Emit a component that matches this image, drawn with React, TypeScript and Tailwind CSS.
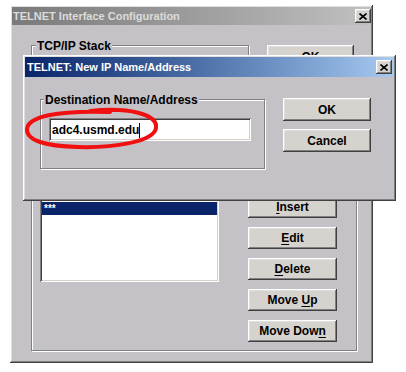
import type { ReactNode } from 'react'

const raised = 'shadow-[inset_-1px_-1px_#404040,inset_1px_1px_#ffffff,inset_-2px_-2px_#808080,inset_2px_2px_#dfdfdf]'
const sunken = 'shadow-[inset_1px_1px_#808080,inset_-1px_-1px_#ffffff,inset_2px_2px_#404040,inset_-2px_-2px_#d4d0c8]'
const etched = 'border border-[#808080] shadow-[inset_1px_1px_#ffffff,1px_1px_#ffffff]'

function CloseBox() {
  return (
    <div className={`w-[16px] h-[14px] bg-[#d6d3ce] flex items-center justify-center ${raised}`}>
      <svg width="8" height="7" viewBox="0 0 8 7">
        <path d="M0.5 0.5 L7.5 6.5 M7.5 0.5 L0.5 6.5" stroke="#000" strokeWidth="1.6" />
      </svg>
    </div>
  )
}

function Btn({ children, className = '' }: { children: ReactNode; className?: string }) {
  return (
    <div className={`h-[22px] bg-[#d6d3ce] flex items-center justify-center text-[12px] font-bold text-black ${raised} ${className}`}>
      {children}
    </div>
  )
}

function U({ children }: { children: ReactNode }) {
  return <span className="underline underline-offset-[2px]">{children}</span>
}

export default function App() {
  return (
    <div className="relative w-[406px] h-[372px] bg-white overflow-hidden font-['Liberation_Sans',Arial,sans-serif]">
      {/* main window */}
      <div className={`absolute left-[10px] top-[5px] w-[363px] h-[358px] bg-[#c4c2c6] p-[2px] flex flex-col ${raised}`}>
        <div className="h-[18px] flex items-center justify-between pl-[1px] bg-linear-to-r from-[#7a7a7a] to-[#c0c0c0]">
          <span className="text-[11px] font-bold text-[#dcdcdc] leading-none">TELNET Interface Configuration</span>
          <CloseBox />
        </div>
        <div className="flex items-start pl-[19px] pt-[20px]">
          <div className={`relative w-[218px] h-[100px] ${etched}`}>
            <span className="absolute -top-[7px] left-[4px] px-[1px] bg-[#c4c2c6] text-[12px] leading-[14px] font-bold text-black">TCP/IP Stack</span>
          </div>
          <Btn className="ml-[18px] w-[87px] !h-[23px]">OK</Btn>
        </div>
        <div className={`ml-[19px] mt-[5px] w-[326px] h-[201px] flex items-start ${etched}`}>
          <div className={`ml-[8px] mt-[48px] w-[179px] h-[83px] bg-white p-[2px] ${sunken}`}>
            <div className="mt-[1px] h-[13px] bg-[#0a246a] text-white text-[10px] font-bold leading-[13px] pl-[2px]">***</div>
          </div>
          <div className="ml-[29px] mt-[45px] flex flex-col gap-[9px] w-[89px]">
            <Btn><U>I</U>nsert</Btn>
            <Btn><U>E</U>dit</Btn>
            <Btn><U>D</U>elete</Btn>
            <Btn>Move&nbsp;<U>U</U>p</Btn>
            <Btn>Move Dow<U>n</U></Btn>
          </div>
        </div>
      </div>

      {/* dialog */}
      <div className={`absolute left-[23px] top-[55px] w-[373px] h-[146px] bg-[#c4c2c6] p-[2px] flex flex-col ${raised}`}>
        <div className="h-[20px] flex items-center justify-between px-[2px] bg-linear-to-r from-[#0a246a] to-[#a6caf0]">
          <span className="text-[11px] font-bold text-white leading-none">TELNET: New IP Name/Address</span>
          <CloseBox />
        </div>
        <div className="flex items-start pl-[15px]">
          <div className={`relative mt-[22px] w-[225px] h-[70px] ${etched}`}>
            <span className="absolute -top-[7px] left-[3px] px-[1px] bg-[#c4c2c6] text-[12px] leading-[14px] font-bold text-black">Destination Name/Address</span>
            <div className={`ml-[8px] mt-[18px] w-[202px] h-[23px] bg-white pl-[3px] pt-[1px] flex items-center ${sunken}`}>
              <span className="text-[12px] font-bold text-black leading-none">adc4.usmd.edu</span>
              <span className="w-[1px] h-[15px] bg-black" />
            </div>
          </div>
          <div className="ml-[18px] mt-[21px] flex flex-col gap-[8px] w-[88px]">
            <Btn className="!h-[23px]">OK</Btn>
            <Btn className="!h-[23px]">Cancel</Btn>
          </div>
        </div>
      </div>

      {/* red hand-drawn circle */}
      <svg className="absolute left-0 top-0 pointer-events-none" width="406" height="372" viewBox="0 0 406 372">
        <path
          d="M90 111 C128 107, 158 114, 156 128 C154 142, 112 148, 78 147 C44 146, 26 140, 27 129 C28 117, 56 110, 110 112"
          fill="none"
          stroke="#f01010"
          strokeWidth="4"
          strokeLinecap="round"
        />
      </svg>
    </div>
  )
}
